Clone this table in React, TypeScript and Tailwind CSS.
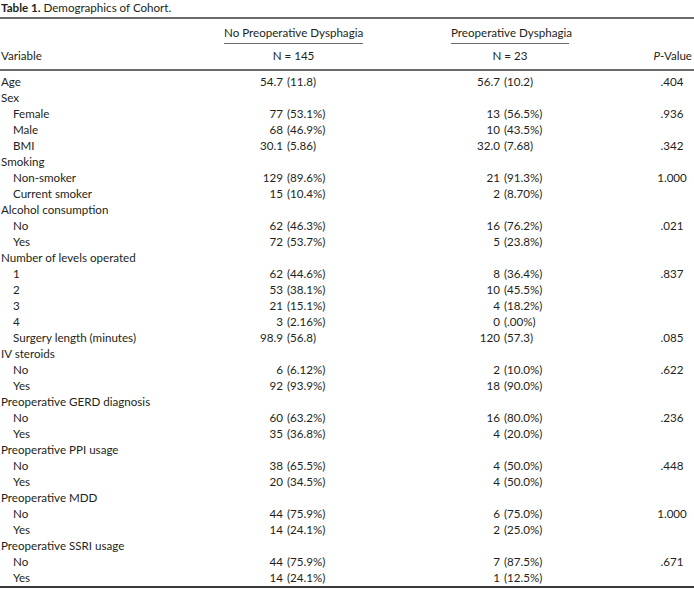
type Pair = [string, string];

type Row = {
    label: string;
    sub?: boolean;
    a?: Pair;
    b?: Pair;
    p?: string;
};

const ROWS: Row[] = [
    { label: 'Age', a: ['54.7', '(11.8)'], b: ['56.7', '(10.2)'], p: '.404' },
    { label: 'Sex' },
    { label: 'Female', sub: true, a: ['77', '(53.1%)'], b: ['13', '(56.5%)'], p: '.936' },
    { label: 'Male', sub: true, a: ['68', '(46.9%)'], b: ['10', '(43.5%)'] },
    { label: 'BMI', sub: true, a: ['30.1', '(5.86)'], b: ['32.0', '(7.68)'], p: '.342' },
    { label: 'Smoking' },
    { label: 'Non-smoker', sub: true, a: ['129', '(89.6%)'], b: ['21', '(91.3%)'], p: '1.000' },
    { label: 'Current smoker', sub: true, a: ['15', '(10.4%)'], b: ['2', '(8.70%)'] },
    { label: 'Alcohol consumption' },
    { label: 'No', sub: true, a: ['62', '(46.3%)'], b: ['16', '(76.2%)'], p: '.021' },
    { label: 'Yes', sub: true, a: ['72', '(53.7%)'], b: ['5', '(23.8%)'] },
    { label: 'Number of levels operated' },
    { label: '1', sub: true, a: ['62', '(44.6%)'], b: ['8', '(36.4%)'], p: '.837' },
    { label: '2', sub: true, a: ['53', '(38.1%)'], b: ['10', '(45.5%)'] },
    { label: '3', sub: true, a: ['21', '(15.1%)'], b: ['4', '(18.2%)'] },
    { label: '4', sub: true, a: ['3', '(2.16%)'], b: ['0', '(.00%)'] },
    { label: 'Surgery length (minutes)', sub: true, a: ['98.9', '(56.8)'], b: ['120', '(57.3)'], p: '.085' },
    { label: 'IV steroids' },
    { label: 'No', sub: true, a: ['6', '(6.12%)'], b: ['2', '(10.0%)'], p: '.622' },
    { label: 'Yes', sub: true, a: ['92', '(93.9%)'], b: ['18', '(90.0%)'] },
    { label: 'Preoperative GERD diagnosis' },
    { label: 'No', sub: true, a: ['60', '(63.2%)'], b: ['16', '(80.0%)'], p: '.236' },
    { label: 'Yes', sub: true, a: ['35', '(36.8%)'], b: ['4', '(20.0%)'] },
    { label: 'Preoperative PPI usage' },
    { label: 'No', sub: true, a: ['38', '(65.5%)'], b: ['4', '(50.0%)'], p: '.448' },
    { label: 'Yes', sub: true, a: ['20', '(34.5%)'], b: ['4', '(50.0%)'] },
    { label: 'Preoperative MDD' },
    { label: 'No', sub: true, a: ['44', '(75.9%)'], b: ['6', '(75.0%)'], p: '1.000' },
    { label: 'Yes', sub: true, a: ['14', '(24.1%)'], b: ['2', '(25.0%)'] },
    { label: 'Preoperative SSRI usage' },
    { label: 'No', sub: true, a: ['44', '(75.9%)'], b: ['7', '(87.5%)'], p: '.671' },
    { label: 'Yes', sub: true, a: ['14', '(24.1%)'], b: ['1', '(12.5%)'] },
];

function Value({ pair, lead }: { pair?: Pair; lead: string }) {
    if (!pair) return null;
    return (
        <span className="flex whitespace-nowrap">
            <span className={`${lead} shrink-0 text-right`}>{pair[0]}</span>
            <span className="ml-[4px]">{pair[1]}</span>
        </span>
    );
}

export default function App() {
    return (
        <div className="w-[694px] bg-white font-['Lato',sans-serif] text-[11.6px] leading-[16px] text-[#231f20]">
            <div className="h-[16px] pl-[1px] whitespace-nowrap">
                <span className="font-bold">Table 1.</span> Demographics of Cohort.
            </div>
            <div className="mt-[1px] h-[2px] bg-[#6b6b6b]" />

            <div className="flex h-[25px] items-end whitespace-nowrap">
                <div className="w-[224px]" />
                <div className="w-[139px] border-b border-[#6b6b6b] pb-[2px] text-center">
                    No Preoperative Dysphagia
                </div>
                <div className="w-[88px]" />
                <div className="w-[118px] border-b border-[#6b6b6b] pb-[2px] text-center">
                    Preoperative Dysphagia
                </div>
            </div>

            <div className="flex pt-[4px] pb-[5px] whitespace-nowrap">
                <div className="w-[224px] pl-[1px]">Variable</div>
                <div className="w-[139px] text-center">N = 145</div>
                <div className="w-[88px]" />
                <div className="w-[118px] text-center">N = 23</div>
                <div className="flex-1 pr-[2px] text-right">
                    <span className="italic">P</span>-Value
                </div>
            </div>
            <div className="h-[2px] bg-[#6b6b6b]" />

            <div className="pt-[3px]">
                {ROWS.map((row, i) => (
                    <div key={i} className="flex h-[16px] whitespace-nowrap">
                        <div className={`w-[224px] ${row.sub ? 'pl-[13px]' : 'pl-[1px]'}`}>
                            {row.label}
                        </div>
                        <div className="w-[139px]">
                            <Value pair={row.a} lead="w-[59px]" />
                        </div>
                        <div className="w-[88px]" />
                        <div className="w-[118px]">
                            <Value pair={row.b} lead="w-[49px]" />
                        </div>
                        <div className="ml-auto w-[42px] pr-[2px] text-center">{row.p}</div>
                    </div>
                ))}
            </div>
            <div className="h-[2px] bg-[#3a3a3a]" />
        </div>
    );
}
